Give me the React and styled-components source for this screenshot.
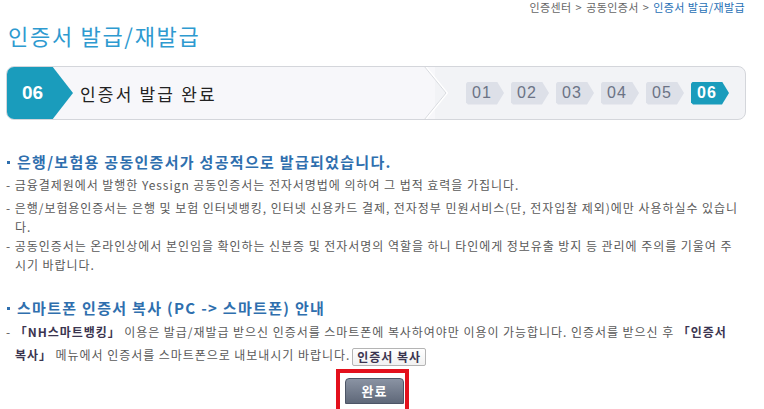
import React from 'react';
import styled, { createGlobalStyle } from 'styled-components';

const GlobalStyle = createGlobalStyle`
  html, body {
    margin: 0;
    padding: 0;
    background: #ffffff;
  }
  body {
    font-family: "Noto Sans CJK KR", "Noto Sans", sans-serif;
    color: #5c5c5c;
  }
`;

const Page = styled.div`
  width: 764px;
  height: 409px;
  overflow: hidden;
  box-sizing: border-box;
  padding: 0 18px 0 6px;
`;

const Breadcrumb = styled.div`
  display: flex;
  justify-content: flex-end;
  gap: 4px;
  font-size: 11px;
  line-height: 14px;
  letter-spacing: 0.4px;
  color: #666;
  margin-right: 1px;
`;

const Crumb = styled.span`
  color: ${(p) => (p.$current ? '#1f6fb5' : '#666')};
`;

const Title = styled.h1`
  margin: 8px 0 0 2px;
  font-size: 22px;
  line-height: 26px;
  font-weight: 400;
  color: #2e9ad0;
  letter-spacing: 1.7px;
`;

const StepBox = styled.div`
  margin-top: 18px;
  height: 54px;
  box-sizing: border-box;
  border: 1px solid #d4d6db;
  border-radius: 8px;
  background: linear-gradient(to right, #f7f7fa 0, #f7f7fa 58%, #f2f3f6 58%);
  display: flex;
  align-items: center;
  overflow: hidden;
`;

const CurrentBadge = styled.div`
  align-self: stretch;
  margin: -1px 0 -1px -1px;
  width: 67px;
  background: #1a9cbc;
  clip-path: polygon(0 0, 46px 0, 67px 50%, 46px 100%, 0 100%);
  display: flex;
  align-items: center;
  padding-left: 16px;
  box-sizing: border-box;
  color: #ffffff;
  font-family: "Liberation Sans", Arial, sans-serif;
  font-weight: 700;
  font-size: 19px;
`;

const StepLabel = styled.div`
  margin-left: 7px;
  font-size: 17px;
  color: #222;
  letter-spacing: 2.2px;
  flex: 1;
`;

const Divider = styled.svg`
  width: 26px;
  height: 54px;
  margin-right: 16px;
  flex: none;
`;

const Pills = styled.div`
  display: flex;
  gap: 7px;
  margin-right: 16px;
`;

const Pill = styled.div`
  width: 38px;
  height: 23px;
  box-sizing: border-box;
  padding-right: 6px;
  display: flex;
  align-items: center;
  justify-content: center;
  background: ${(p) => (p.$active ? '#1a9cbc' : '#dde0e8')};
  clip-path: polygon(2px 0, 31px 0, 38px 50%, 31px 100%, 2px 100%, 0 calc(100% - 2px), 0 2px);
  color: ${(p) => (p.$active ? '#ffffff' : '#6b7385')};
  font-family: "Liberation Sans", Arial, sans-serif;
  font-weight: ${(p) => (p.$active ? 700 : 400)};
  font-size: 16px;
  letter-spacing: 1px;
`;

const Section = styled.section`
  margin-top: ${(p) => p.$top}px;
`;

const Heading = styled.h2`
  display: flex;
  align-items: center;
  margin: 0;
  font-size: 15px;
  line-height: 20px;
  font-weight: 700;
  color: #2f6fae;
  letter-spacing: 1.3px;
  &::before {
    content: '';
    width: 3px;
    height: 3px;
    background: #2f6fae;
    margin: 0 7px 0 1px;
  }
`;

const Para = styled.p`
  margin: ${(p) => (p.$gap ?? 4)}px 0 0;
  padding-left: 9px;
  text-indent: -9px;
  font-size: 12px;
  line-height: ${(p) => p.$lh ?? 19}px;
  letter-spacing: 0.95px;
  white-space: nowrap;
  color: #5a5a5a;
`;

const Strong = styled.b`
  color: #3b3550;
  font-weight: 700;
`;

const SmallButton = styled.button`
  display: inline-block;
  margin-left: 2px;
  padding: 0 4px;
  height: 18px;
  line-height: 16px;
  border: 1px solid #b4b4b4;
  border-radius: 2px;
  background: linear-gradient(#ffffff, #f1f1f1);
  font-family: inherit;
  font-size: 12px;
  font-weight: 700;
  letter-spacing: 1px;
  color: #3b3550;
  text-indent: 0;
  vertical-align: middle;
`;

const Actions = styled.div`
  display: flex;
  justify-content: center;
  margin-top: 3px;
`;

const Highlight = styled.div`
  margin-right: 7px;
  width: 73px;
  height: 46px;
  box-sizing: border-box;
  border: 4px solid #e3101c;
  padding: 4px 0 0 5px;
`;

const DoneButton = styled.button`
  width: 59px;
  height: 26px;
  border: 1px solid #4d5566;
  border-radius: 4px 4px 0 0;
  background: linear-gradient(#8a93a3, #5f6879);
  color: #ffffff;
  font-family: inherit;
  font-size: 13px;
  font-weight: 700;
  letter-spacing: 1px;
  padding: 0;
`;

const steps = ['01', '02', '03', '04', '05', '06'];

export default function App() {
  return (
    <>
      <GlobalStyle />
      <Page>
        <Breadcrumb>
          <Crumb>인증센터</Crumb>
          <Crumb>&gt;</Crumb>
          <Crumb>공동인증서</Crumb>
          <Crumb>&gt;</Crumb>
          <Crumb $current>인증서 발급/재발급</Crumb>
        </Breadcrumb>
        <Title>인증서 발급/재발급</Title>

        <StepBox>
          <CurrentBadge>06</CurrentBadge>
          <StepLabel>인증서 발급 완료</StepLabel>
          <Divider viewBox="0 0 26 54">
            <polyline points="1,0 23,27 1,54" fill="none" stroke="#ffffff" strokeWidth="2" />
            <polyline points="0,0 22,27 0,54" fill="none" stroke="#d9dbe0" strokeWidth="1" />
          </Divider>
          <Pills>
            {steps.map((s) => (
              <Pill key={s} $active={s === '06'}>{s}</Pill>
            ))}
          </Pills>
        </StepBox>

        <Section $top={32}>
          <Heading>은행/보험용 공동인증서가 성공적으로 발급되었습니다.</Heading>
          <Para $gap={3}>- 금융결제원에서 발행한 Yessign 공동인증서는 전자서명법에 의하여 그 법적 효력을 가집니다.</Para>
          <Para>- 은행/보험용인증서는 은행 및 보험 인터넷뱅킹, 인터넷 신용카드 결제, 전자정부 민원서비스(단, 전자입찰 제외)에만 사용하실수 있습니<br />다.</Para>
          <Para $gap={0}>- 공동인증서는 온라인상에서 본인임을 확인하는 신분증 및 전자서명의 역할을 하니 타인에게 정보유출 방지 등 관리에 주의를 기울여 주<br />시기 바랍니다.</Para>
        </Section>

        <Section $top={24}>
          <Heading>스마트폰 인증서 복사 (PC -&gt; 스마트폰) 안내</Heading>
          <Para $gap={2} $lh={23}>- <Strong>「NH스마트뱅킹」</Strong> 이용은 발급/재발급 받으신 인증서를 스마트폰에 복사하여야만 이용이 가능합니다. 인증서를 받으신 후 <Strong>「인증서<br />복사」</Strong> 메뉴에서 인증서를 스마트폰으로 내보내시기 바랍니다.<SmallButton>인증서 복사</SmallButton></Para>
        </Section>

        <Actions>
          <Highlight>
            <DoneButton>완료</DoneButton>
          </Highlight>
        </Actions>
      </Page>
    </>
  );
}
